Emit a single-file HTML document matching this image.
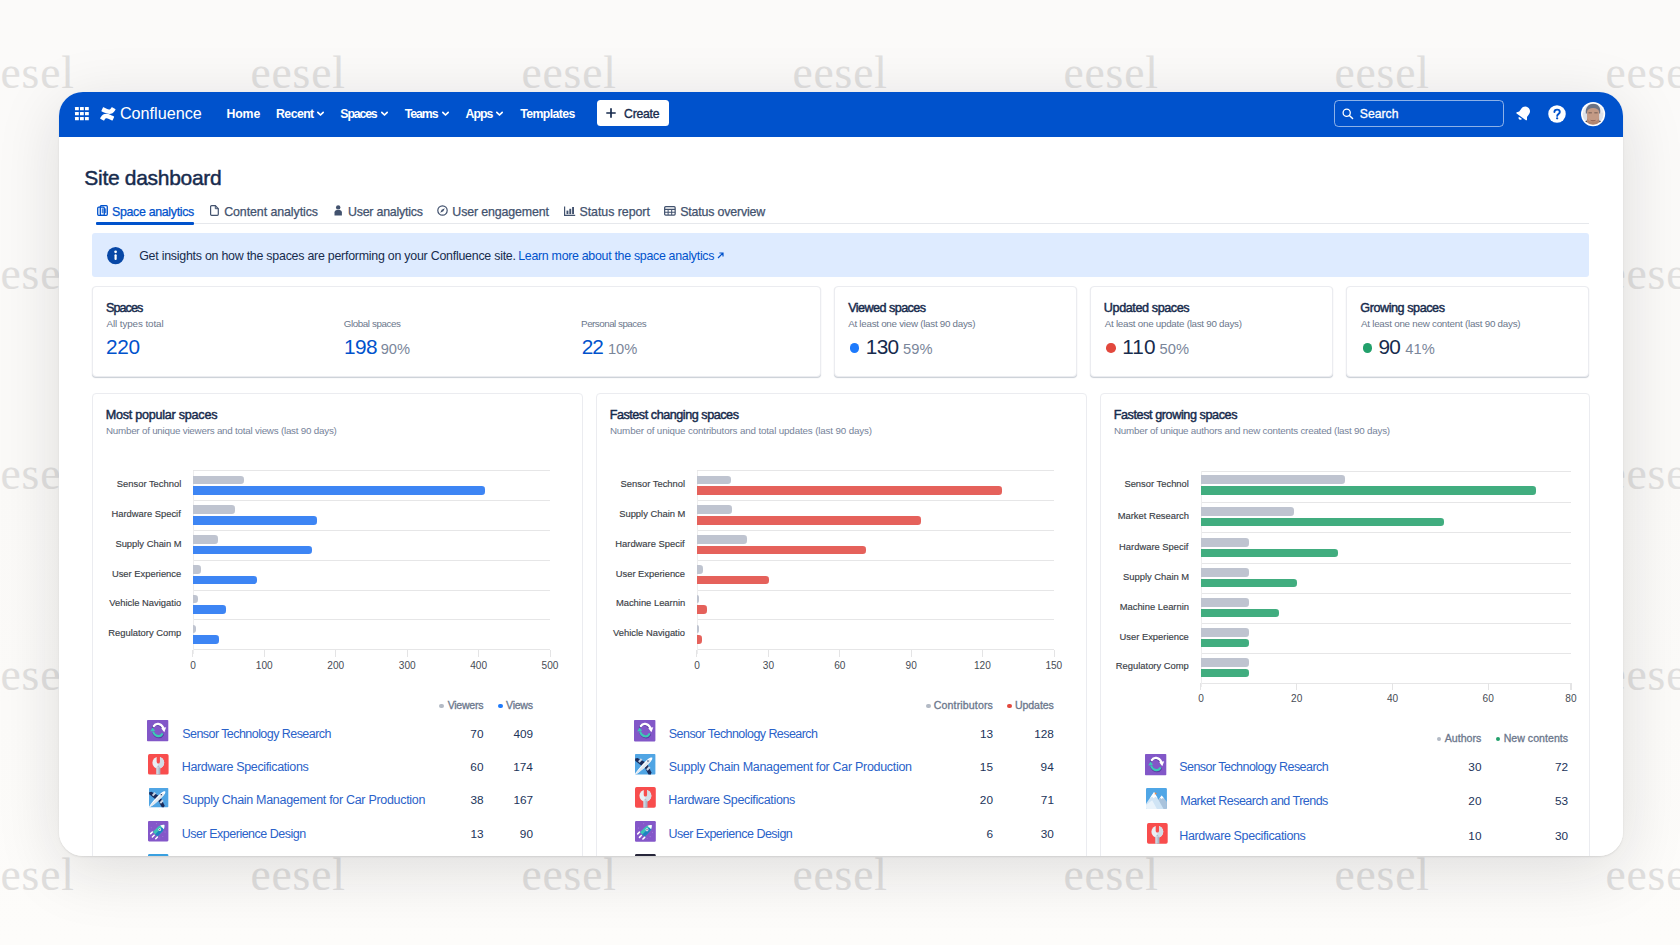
<!DOCTYPE html>
<html lang="en"><head><meta charset="utf-8"><title>Site dashboard - Confluence</title>
<style>
html,body{margin:0;padding:0}
body{width:1680px;height:945px;overflow:hidden;position:relative;background:#fbfaf8;font-family:"Liberation Sans",Arial,sans-serif}
.bg{position:absolute;left:0;top:0;width:1680px;height:945px;background:linear-gradient(180deg,#fbfaf9 0%,#fbfaf8 50%,#fdfcfa 100%)}
.t{position:absolute;white-space:nowrap;margin:0;padding:0}
.wm{position:absolute;white-space:nowrap;font-family:"Liberation Serif","Times New Roman",serif;font-size:45.5px;line-height:58px;color:#e1e0df;letter-spacing:0.85px}
.card{position:absolute;left:59px;top:91.5px;width:1564px;height:764.2px;border-radius:24px;overflow:hidden;background:#fff}
.shadow{position:absolute;left:59px;top:91.5px;width:1564px;height:764.2px;border-radius:24px;box-shadow:0 14px 64px rgba(20,25,30,.135),0 1px 2px rgba(0,0,0,.10)}
.nav{position:absolute;left:0;top:0;width:1564px;height:45px;background:#0052cc}
.panel{position:absolute;background:#fff;border:1px solid #ebecf0;border-radius:4px;box-sizing:border-box}
.stat{box-shadow:0 1px 1px rgba(9,30,66,.22)}
svg{position:absolute;overflow:visible}
</style></head><body>
<div class="bg"></div>

<div class="wm" style="left:-20.5px;top:43.5px">eesel</div>
<div class="wm" style="left:250.5px;top:43.5px">eesel</div>
<div class="wm" style="left:521.5px;top:43.5px">eesel</div>
<div class="wm" style="left:792.5px;top:43.5px">eesel</div>
<div class="wm" style="left:1063.5px;top:43.5px">eesel</div>
<div class="wm" style="left:1334.5px;top:43.5px">eesel</div>
<div class="wm" style="left:1605.5px;top:43.5px">eesel</div>
<div class="wm" style="left:-20.5px;top:244.5px">eesel</div>
<div class="wm" style="left:250.5px;top:244.5px">eesel</div>
<div class="wm" style="left:521.5px;top:244.5px">eesel</div>
<div class="wm" style="left:792.5px;top:244.5px">eesel</div>
<div class="wm" style="left:1063.5px;top:244.5px">eesel</div>
<div class="wm" style="left:1334.5px;top:244.5px">eesel</div>
<div class="wm" style="left:1605.5px;top:244.5px">eesel</div>
<div class="wm" style="left:-20.5px;top:444.5px">eesel</div>
<div class="wm" style="left:250.5px;top:444.5px">eesel</div>
<div class="wm" style="left:521.5px;top:444.5px">eesel</div>
<div class="wm" style="left:792.5px;top:444.5px">eesel</div>
<div class="wm" style="left:1063.5px;top:444.5px">eesel</div>
<div class="wm" style="left:1334.5px;top:444.5px">eesel</div>
<div class="wm" style="left:1605.5px;top:444.5px">eesel</div>
<div class="wm" style="left:-20.5px;top:645.5px">eesel</div>
<div class="wm" style="left:250.5px;top:645.5px">eesel</div>
<div class="wm" style="left:521.5px;top:645.5px">eesel</div>
<div class="wm" style="left:792.5px;top:645.5px">eesel</div>
<div class="wm" style="left:1063.5px;top:645.5px">eesel</div>
<div class="wm" style="left:1334.5px;top:645.5px">eesel</div>
<div class="wm" style="left:1605.5px;top:645.5px">eesel</div>
<div class="wm" style="left:-20.5px;top:845.5px">eesel</div>
<div class="wm" style="left:250.5px;top:845.5px">eesel</div>
<div class="wm" style="left:521.5px;top:845.5px">eesel</div>
<div class="wm" style="left:792.5px;top:845.5px">eesel</div>
<div class="wm" style="left:1063.5px;top:845.5px">eesel</div>
<div class="wm" style="left:1334.5px;top:845.5px">eesel</div>
<div class="wm" style="left:1605.5px;top:845.5px">eesel</div>
<div class="shadow"></div>
<div class="card">
<div class="nav"></div>
<svg style="left:15.900000000000006px;top:15.400000000000006px" width="15" height="14" viewBox="0 0 15 14"><rect x="0.00" y="0.00" width="3.8" height="3.3" rx="0.4" fill="#fff"/><rect x="5.00" y="0.00" width="3.8" height="3.3" rx="0.4" fill="#fff"/><rect x="10.00" y="0.00" width="3.8" height="3.3" rx="0.4" fill="#fff"/><rect x="0.00" y="5.00" width="3.8" height="3.3" rx="0.4" fill="#fff"/><rect x="5.00" y="5.00" width="3.8" height="3.3" rx="0.4" fill="#fff"/><rect x="10.00" y="5.00" width="3.8" height="3.3" rx="0.4" fill="#fff"/><rect x="0.00" y="10.00" width="3.8" height="3.3" rx="0.4" fill="#fff"/><rect x="5.00" y="10.00" width="3.8" height="3.3" rx="0.4" fill="#fff"/><rect x="10.00" y="10.00" width="3.8" height="3.3" rx="0.4" fill="#fff"/></svg>
<svg style="left:41px;top:15.099999999999994px" width="15.6" height="13.8" viewBox="0 0 32 30" preserveAspectRatio="none"><path d="M1.2 22.6c-.3.5-.7 1.1-.9 1.5-.3.5-.1 1.1.4 1.400l6.400 3.900c.5.300 1.100.200 1.400-.3.200-.4.600-1 .9-1.600 2.300-3.800 4.700-3.400 8.900-1.300l6.300 3c.5.300 1.200 0 1.400-.5l3-6.900c.2-.5 0-1.100-.5-1.400-1.300-.6-4-1.900-6.300-3C13.500 13.300 6.200 13.600 1.200 22.600z" fill="#fff"/><path d="M30.800 7.400c.3-.5.700-1.100.9-1.500.3-.5.100-1.100-.4-1.400L24.900.6c-.5-.3-1.100-.2-1.400.3-.2.400-.6 1-.9 1.600-2.300 3.800-4.700 3.400-8.900 1.300L7.400.8C6.900.5 6.200.8 6 1.300l-3 6.900c-.2.500 0 1.100.5 1.400 1.300.6 4 1.900 6.300 3 8.700 4.100 16 3.800 21-5.200z" fill="#fff"/></svg>
<span class="t" style="top:12.50px;font-size:16.2px;line-height:19.44px;color:#fff;letter-spacing:0.005px;left:60.88px;">Confluence</span>
<span class="t" style="top:15.50px;font-size:12.3px;line-height:14.76px;color:#fff;font-weight:700;letter-spacing:-0.174px;left:167.58px;">Home</span>
<span class="t" style="top:15.50px;font-size:12.3px;line-height:14.76px;color:#fff;font-weight:700;letter-spacing:-0.586px;left:217.08px;">Recent</span>
<svg style="left:258.2px;top:19.3px" width="7" height="6" viewBox="0 0 7 6"><path d="M0.8 1.3 L3.5 4 L6.2 1.3" fill="none" stroke="#fff" stroke-width="1.7" stroke-linecap="round" stroke-linejoin="round"/></svg>
<span class="t" style="top:15.50px;font-size:12.3px;line-height:14.76px;color:#fff;font-weight:700;letter-spacing:-1.142px;left:281.35px;">Spaces</span>
<svg style="left:321.8px;top:19.3px" width="7" height="6" viewBox="0 0 7 6"><path d="M0.8 1.3 L3.5 4 L6.2 1.3" fill="none" stroke="#fff" stroke-width="1.7" stroke-linecap="round" stroke-linejoin="round"/></svg>
<span class="t" style="top:15.50px;font-size:12.3px;line-height:14.76px;color:#fff;font-weight:700;letter-spacing:-1.077px;left:345.76px;">Teams</span>
<svg style="left:383.0px;top:19.3px" width="7" height="6" viewBox="0 0 7 6"><path d="M0.8 1.3 L3.5 4 L6.2 1.3" fill="none" stroke="#fff" stroke-width="1.7" stroke-linecap="round" stroke-linejoin="round"/></svg>
<span class="t" style="top:15.50px;font-size:12.3px;line-height:14.76px;color:#fff;font-weight:700;letter-spacing:-0.944px;left:406.49px;">Apps</span>
<svg style="left:437.4px;top:19.3px" width="7" height="6" viewBox="0 0 7 6"><path d="M0.8 1.3 L3.5 4 L6.2 1.3" fill="none" stroke="#fff" stroke-width="1.7" stroke-linecap="round" stroke-linejoin="round"/></svg>
<span class="t" style="top:15.50px;font-size:12.3px;line-height:14.76px;color:#fff;font-weight:700;letter-spacing:-0.621px;left:461.36px;">Templates</span>
<div style="position:absolute;left:537.80px;top:8.50px;width:72.20px;height:26.20px;background:#fff;border-radius:3.5px"></div>
<svg style="left:546.6px;top:16.5px" width="10" height="10" viewBox="0 0 10 10"><path d="M5 0.3V9.7M0.3 5H9.7" stroke="#172b4d" stroke-width="1.7" fill="none"/></svg>
<span class="t" style="top:15.50px;font-size:12.2px;line-height:14.64px;color:#172b4d;letter-spacing:-0.224px;left:565.08px;-webkit-text-stroke:0.35px #172b4d;">Create</span>
<div style="position:absolute;left:1274.60px;top:8.30px;width:170.20px;height:26.80px;box-sizing:border-box;border:1.2px solid rgba(255,255,255,.55);border-radius:4.5px"></div>
<svg style="left:1282.6px;top:16.099999999999994px" width="12" height="12" viewBox="0 0 12 12"><circle cx="4.7" cy="4.7" r="3.6" fill="none" stroke="#fff" stroke-width="1.3"/><path d="M7.4 7.4L10.6 10.6" stroke="#fff" stroke-width="1.4" stroke-linecap="round"/></svg>
<span class="t" style="top:15.50px;font-size:12.2px;line-height:14.64px;color:#fff;letter-spacing:0.006px;left:1300.85px;-webkit-text-stroke:0.3px #fff;">Search</span>
<svg style="left:1454.9px;top:12.400000000000006px" width="19.2" height="19.2" viewBox="0 0 24 24"><g transform="rotate(36 12 12)" fill="#fff"><path d="M12 2.6c-3.600 0-6 2.700-6 6.200v4.200l-1.900 2.600c-.4.600 0 1.400.7 1.400h14.400c.7 0 1.100-.8.700-1.400L18 13V8.800c0-3.500-2.400-6.200-6-6.200z"/><path d="M9.600 18.600h4.800c0 1.400-1.100 2.400-2.400 2.400s-2.400-1-2.400-2.400z"/></g></svg>
<svg style="left:1488.8px;top:13.0px" width="18" height="18" viewBox="0 0 18 18"><circle cx="9" cy="9" r="8.750" fill="#fff"/><path d="M6.400 7.100c0-1.500 1.200-2.500 2.700-2.500s2.700 1 2.700 2.400c0 1.900-2.600 2.100-2.600 3.900" fill="none" stroke="#0052cc" stroke-width="1.900" stroke-linecap="round"/><circle cx="9.150" cy="13.300" r="1.150" fill="#0052cc"/></svg>
<svg style="left:1521.5px;top:10.200000000000003px" width="24.2" height="24.2" viewBox="0 0 50 50"><defs><clipPath id="av"><circle cx="25" cy="25" r="21.800"/></clipPath></defs><circle cx="25" cy="25" r="25" fill="#fff"/><g clip-path="url(#av)"><rect width="50" height="50" fill="#dde1e8"/><rect x="0" y="0" width="50" height="22" fill="#e9ecf1"/><path d="M10 24C8 10 17 3.500 25.500 3.500S42 10 39.500 24z" fill="#6c7384"/><path d="M12.500 20c1-5 6-7.500 12.500-7.500s11.500 2.500 12.500 7.500v10c0 8-5 15-12.500 15S12.500 38 12.500 30z" fill="#c39a85"/><path d="M12.500 32c2 6 6 9 12.500 9s10.500-3 12.500-9v18h-25z" fill="#b28670"/><path d="M15.500 21.500h7v1.800h-7zM27.500 21.500h7v1.800h-7z" fill="#5d4a45"/><path d="M19 36.500c4 1.500 8 1.500 12 0-1 2.500-3.500 3.500-6 3.500s-5-1-6-3.500z" fill="#8c5c4e"/><path d="M0 50V43l12-5 1 12zM50 50V43l-12-5-1 12z" fill="#3b3843"/></g></svg>
<span class="t" style="top:73.50px;font-size:21px;line-height:25.2px;color:#172b4d;letter-spacing:-0.305px;left:25.35px;-webkit-text-stroke:0.45px #172b4d;">Site dashboard</span>
<div style="position:absolute;left:37.00px;top:131.80px;width:1493.00px;height:1.10px;background:#e6e8ec"></div>
<div style="position:absolute;left:36.60px;top:130.90px;width:98.30px;height:2.20px;background:#0052cc;border-radius:1px"></div>
<span class="t" style="top:113.50px;font-size:12.4px;line-height:14.88px;color:#0052cc;letter-spacing:-0.327px;left:53.04px;-webkit-text-stroke:0.25px #0052cc;">Space analytics</span>
<span class="t" style="top:113.50px;font-size:12.4px;line-height:14.88px;color:#42526e;letter-spacing:-0.073px;left:165.17px;-webkit-text-stroke:0.25px #42526e;">Content analytics</span>
<span class="t" style="top:113.50px;font-size:12.4px;line-height:14.88px;color:#42526e;letter-spacing:-0.231px;left:289.04px;-webkit-text-stroke:0.25px #42526e;">User analytics</span>
<span class="t" style="top:113.50px;font-size:12.4px;line-height:14.88px;color:#42526e;letter-spacing:-0.132px;left:393.34px;-webkit-text-stroke:0.25px #42526e;">User engagement</span>
<span class="t" style="top:113.50px;font-size:12.4px;line-height:14.88px;color:#42526e;letter-spacing:-0.040px;left:520.44px;-webkit-text-stroke:0.25px #42526e;">Status report</span>
<span class="t" style="top:113.50px;font-size:12.4px;line-height:14.88px;color:#42526e;letter-spacing:-0.173px;left:621.14px;-webkit-text-stroke:0.25px #42526e;">Status overview</span>
<svg style="left:37.6px;top:113.7px" width="11" height="11" viewBox="0 0 11 11"><rect x="0.7" y="2.2" width="6.6" height="8.100" rx="1" fill="none" stroke="#0052cc" stroke-width="1.300"/><rect x="3.300" y="0.7" width="7" height="9.600" rx="1" fill="none" stroke="#0052cc" stroke-width="1.300"/><path d="M5.300 3.400v4.800M7.100 3.400v4.800M8.700 3.400v4.800" stroke="#0052cc" stroke-width="0.9"/></svg>
<svg style="left:150.8px;top:113.8px" width="9" height="11" viewBox="0 0 9 11"><path d="M1.600 0.7h3.700l3 3v5.600a1 1 0 0 1-1 1H1.600a1 1 0 0 1-1-1V1.700a1 1 0 0 1 1-1z" fill="none" stroke="#42526e" stroke-width="1.200"/><path d="M5.300 0.700v3h3" fill="none" stroke="#42526e" stroke-width="1"/></svg>
<svg style="left:274.8px;top:113.5px" width="8.4" height="11" viewBox="0 0 8.400 11"><circle cx="4.200" cy="2.400" r="2.200" fill="#42526e"/><path d="M0.500 10.500V7.600c0-1.500 1.100-2.500 2.400-2.500h2.600c1.300 0 2.400 1 2.400 2.500v2.900z" fill="#42526e"/></svg>
<svg style="left:378.1px;top:113.7px" width="11" height="11" viewBox="0 0 11 11"><circle cx="5.500" cy="5.500" r="4.700" fill="none" stroke="#42526e" stroke-width="1.200"/><path d="M7.800 3.200L6.300 6.300 3.200 7.800 4.700 4.700z" fill="#42526e"/></svg>
<svg style="left:504.5px;top:114.3px" width="11.5" height="10" viewBox="0 0 11.500 10"><path d="M0.600 0.500v8.800h10.600" fill="none" stroke="#42526e" stroke-width="1.200"/><rect x="2.500" y="4.600" width="1.900" height="3.500" fill="#42526e"/><rect x="5.300" y="2.800" width="1.900" height="5.300" fill="#42526e"/><rect x="8.100" y="1" width="1.900" height="7.100" fill="#42526e"/></svg>
<svg style="left:605.2px;top:114.5px" width="11.8" height="9.7" viewBox="0 0 11.500 9.500"><rect x="0.600" y="0.600" width="10.300" height="8.300" rx="1" fill="none" stroke="#42526e" stroke-width="1.200"/><path d="M0.600 3.300h10.300M0.600 6.100h10.300M4 3.300v5.600M7.500 3.300v5.600" stroke="#42526e" stroke-width="1"/></svg>
<div style="position:absolute;left:33.00px;top:141.70px;width:1497.00px;height:44.20px;background:#deebff;border-radius:3px"></div>
<svg style="left:48.1px;top:155.6px" width="17.2" height="17.2" viewBox="0 0 17.200 17.200"><circle cx="8.600" cy="8.600" r="8.600" fill="#0747a6"/><rect x="7.500" y="7.300" width="2.200" height="5.800" rx="1" fill="#fff"/><circle cx="8.600" cy="4.800" r="1.350" fill="#fff"/></svg>
<span class="t" style="top:157.50px;font-size:12.4px;line-height:14.88px;color:#172b4d;letter-spacing:-0.239px;left:80.18px;">Get insights on how the spaces are performing on your Confluence site.</span>
<span class="t" style="top:157.50px;font-size:12.4px;line-height:14.88px;color:#0052cc;letter-spacing:-0.299px;left:459.28px;">Learn more about the space analytics</span>
<svg style="left:658.0px;top:160.1px" width="7" height="7" viewBox="0 0 7 7"><path d="M1 6L6 1M2.400 1H6v3.600" fill="none" stroke="#0052cc" stroke-width="1.200"/></svg>
<div class="panel stat" style="left:33px;top:194.5px;width:728.5px;height:91px"></div>
<div class="panel stat" style="left:775px;top:194.5px;width:243px;height:91px"></div>
<div class="panel stat" style="left:1031px;top:194.5px;width:243px;height:91px"></div>
<div class="panel stat" style="left:1287px;top:194.5px;width:243px;height:91px"></div>
<span class="t" style="top:209.50px;font-size:12.6px;line-height:15.12px;color:#172b4d;letter-spacing:-0.936px;left:46.93px;-webkit-text-stroke:0.45px #172b4d;">Spaces</span>
<span class="t" style="top:226.50px;font-size:9.8px;line-height:11.76px;color:#6b778c;letter-spacing:-0.078px;left:47.48px;">All types total</span>
<span class="t" style="top:243.50px;font-size:20.8px;line-height:24.96px;color:#0052cc;letter-spacing:-0.270px;left:46.95px;">220</span>
<span class="t" style="top:226.50px;font-size:9.8px;line-height:11.76px;color:#6b778c;letter-spacing:-0.420px;left:284.81px;">Global spaces</span>
<span class="t" style="top:243.50px;font-size:20.8px;line-height:24.96px;color:#0052cc;letter-spacing:-0.605px;left:285.12px;">198</span>
<span class="t" style="top:249.50px;font-size:14.7px;line-height:17.64px;color:#7a869a;letter-spacing:-0.042px;left:321.71px;">90%</span>
<span class="t" style="top:226.50px;font-size:9.8px;line-height:11.76px;color:#6b778c;letter-spacing:-0.498px;left:522.10px;">Personal spaces</span>
<span class="t" style="top:243.50px;font-size:20.8px;line-height:24.96px;color:#0052cc;letter-spacing:-1.040px;left:522.85px;">22</span>
<span class="t" style="top:249.50px;font-size:14.7px;line-height:17.64px;color:#7a869a;letter-spacing:-0.026px;left:548.88px;">10%</span>
<span class="t" style="top:209.50px;font-size:12.6px;line-height:15.12px;color:#172b4d;letter-spacing:-0.539px;left:789.14px;-webkit-text-stroke:0.45px #172b4d;">Viewed spaces</span>
<span class="t" style="top:226.50px;font-size:9.8px;line-height:11.76px;color:#6b778c;letter-spacing:-0.266px;left:789.18px;">At least one view (last 90 days)</span>
<div style="position:absolute;left:790.80px;top:251.90px;width:9.60px;height:9.60px;background:#1d7afc;border-radius:50%"></div>
<span class="t" style="top:243.50px;font-size:20.8px;line-height:24.96px;color:#172b4d;letter-spacing:-0.651px;left:806.72px;">130</span>
<span class="t" style="top:249.50px;font-size:14.7px;line-height:17.64px;color:#7a869a;letter-spacing:0.008px;left:844.11px;">59%</span>
<span class="t" style="top:209.50px;font-size:12.6px;line-height:15.12px;color:#172b4d;letter-spacing:-0.399px;left:1044.83px;-webkit-text-stroke:0.45px #172b4d;">Updated spaces</span>
<span class="t" style="top:226.50px;font-size:9.8px;line-height:11.76px;color:#6b778c;letter-spacing:-0.264px;left:1045.78px;">At least one update (last 90 days)</span>
<div style="position:absolute;left:1047.40px;top:251.90px;width:9.60px;height:9.60px;background:#e2483d;border-radius:50%"></div>
<span class="t" style="top:243.50px;font-size:20.8px;line-height:24.96px;color:#172b4d;letter-spacing:0.121px;left:1063.22px;">110</span>
<span class="t" style="top:249.50px;font-size:14.7px;line-height:17.64px;color:#7a869a;letter-spacing:0.158px;left:1100.41px;">50%</span>
<span class="t" style="top:209.50px;font-size:12.6px;line-height:15.12px;color:#172b4d;letter-spacing:-0.439px;left:1301.37px;-webkit-text-stroke:0.45px #172b4d;">Growing spaces</span>
<span class="t" style="top:226.50px;font-size:9.8px;line-height:11.76px;color:#6b778c;letter-spacing:-0.242px;left:1301.98px;">At least one new content (last 90 days)</span>
<div style="position:absolute;left:1303.60px;top:251.90px;width:9.60px;height:9.60px;background:#22a06b;border-radius:50%"></div>
<span class="t" style="top:243.50px;font-size:20.8px;line-height:24.96px;color:#172b4d;letter-spacing:-0.845px;left:1319.53px;">90</span>
<span class="t" style="top:249.50px;font-size:14.7px;line-height:17.64px;color:#7a869a;letter-spacing:0.032px;left:1346.36px;">41%</span>
<div class="panel" style="left:33.0px;top:301.5px;width:490.5px;height:520px"></div>
<span class="t" style="top:316.50px;font-size:12.6px;line-height:15.12px;color:#172b4d;letter-spacing:-0.245px;left:46.67px;-webkit-text-stroke:0.45px #172b4d;">Most popular spaces</span>
<span class="t" style="top:333.50px;font-size:9.8px;line-height:11.76px;color:#76839a;letter-spacing:-0.221px;left:46.90px;">Number of unique viewers and total views (last 90 days)</span>
<div style="position:absolute;left:134.00px;top:378.50px;width:357.00px;height:1.00px;background:#e6e6e7"></div>
<div style="position:absolute;left:134.00px;top:408.50px;width:357.00px;height:1.00px;background:#e6e6e7"></div>
<div style="position:absolute;left:134.00px;top:438.50px;width:357.00px;height:1.00px;background:#e6e6e7"></div>
<div style="position:absolute;left:134.00px;top:468.50px;width:357.00px;height:1.00px;background:#e6e6e7"></div>
<div style="position:absolute;left:134.00px;top:498.50px;width:357.00px;height:1.00px;background:#e6e6e7"></div>
<div style="position:absolute;left:134.00px;top:527.50px;width:357.00px;height:1.00px;background:#e6e6e7"></div>
<div style="position:absolute;left:134.00px;top:557.50px;width:357.00px;height:1.00px;background:#e6e6e7"></div>
<div style="position:absolute;left:133.50px;top:379.50px;width:1.00px;height:182.70px;background:#ededee"></div>
<div style="position:absolute;left:133.00px;top:558.50px;width:1.00px;height:6.50px;background:#e4e4e5"></div>
<span class="t" style="top:568.50px;font-size:10.1px;line-height:12.12px;color:#474c55;left:131.19px;">0</span>
<div style="position:absolute;left:205.00px;top:558.50px;width:1.00px;height:6.50px;background:#e4e4e5"></div>
<span class="t" style="top:568.50px;font-size:10.1px;line-height:12.12px;color:#474c55;left:196.79px;">100</span>
<div style="position:absolute;left:276.00px;top:558.50px;width:1.00px;height:6.50px;background:#e4e4e5"></div>
<span class="t" style="top:568.50px;font-size:10.1px;line-height:12.12px;color:#474c55;left:268.32px;">200</span>
<div style="position:absolute;left:348.00px;top:558.50px;width:1.00px;height:6.50px;background:#e4e4e5"></div>
<span class="t" style="top:568.50px;font-size:10.1px;line-height:12.12px;color:#474c55;left:339.78px;">300</span>
<div style="position:absolute;left:419.00px;top:558.50px;width:1.00px;height:6.50px;background:#e4e4e5"></div>
<span class="t" style="top:568.50px;font-size:10.1px;line-height:12.12px;color:#474c55;left:411.26px;">400</span>
<div style="position:absolute;left:491.00px;top:558.50px;width:1.00px;height:6.50px;background:#e4e4e5"></div>
<span class="t" style="top:568.50px;font-size:10.1px;line-height:12.12px;color:#474c55;left:482.57px;">500</span>
<div style="position:absolute;left:491.00px;top:558.50px;width:1.00px;height:6.50px;background:#e4e4e5"></div>
<span class="t" style="top:386.50px;font-size:9.4px;line-height:11.28px;color:#3a3e46;left:57.81px;-webkit-text-stroke:0.15px #3a3e46;">Sensor Technol</span>
<span class="t" style="top:416.50px;font-size:9.4px;line-height:11.28px;color:#3a3e46;left:52.49px;-webkit-text-stroke:0.15px #3a3e46;">Hardware Specif</span>
<span class="t" style="top:446.50px;font-size:9.4px;line-height:11.28px;color:#3a3e46;left:56.39px;-webkit-text-stroke:0.15px #3a3e46;">Supply Chain M</span>
<span class="t" style="top:476.50px;font-size:9.4px;line-height:11.28px;color:#3a3e46;left:52.92px;-webkit-text-stroke:0.15px #3a3e46;">User Experience</span>
<span class="t" style="top:505.50px;font-size:9.4px;line-height:11.28px;color:#3a3e46;left:50.28px;-webkit-text-stroke:0.15px #3a3e46;">Vehicle Navigatio</span>
<span class="t" style="top:535.50px;font-size:9.4px;line-height:11.28px;color:#3a3e46;left:49.25px;-webkit-text-stroke:0.15px #3a3e46;">Regulatory Comp</span>
<div style="position:absolute;left:134.00px;top:384.10px;width:50.78px;height:8.60px;background:#bfc4d0;border-radius:0 3.200px 3.200px 0"></div>
<div style="position:absolute;left:134.00px;top:394.70px;width:292.03px;height:8.60px;background:#3d85f4;border-radius:0 3.200px 3.200px 0"></div>
<div style="position:absolute;left:134.00px;top:413.90px;width:41.50px;height:8.60px;background:#bfc4d0;border-radius:0 3.200px 3.200px 0"></div>
<div style="position:absolute;left:134.00px;top:424.50px;width:124.24px;height:8.60px;background:#3d85f4;border-radius:0 3.200px 3.200px 0"></div>
<div style="position:absolute;left:134.00px;top:443.70px;width:25.13px;height:8.60px;background:#bfc4d0;border-radius:0 3.200px 3.200px 0"></div>
<div style="position:absolute;left:134.00px;top:454.30px;width:119.24px;height:8.60px;background:#3d85f4;border-radius:0 3.200px 3.200px 0"></div>
<div style="position:absolute;left:134.00px;top:473.50px;width:8.28px;height:8.60px;background:#bfc4d0;border-radius:0 3.200px 3.200px 0"></div>
<div style="position:absolute;left:134.00px;top:484.10px;width:64.26px;height:8.60px;background:#3d85f4;border-radius:0 3.200px 3.200px 0"></div>
<div style="position:absolute;left:134.00px;top:503.30px;width:4.50px;height:8.60px;background:#bfc4d0;border-radius:0 3.200px 3.200px 0"></div>
<div style="position:absolute;left:134.00px;top:513.90px;width:33.00px;height:8.60px;background:#3d85f4;border-radius:0 3.200px 3.200px 0"></div>
<div style="position:absolute;left:134.00px;top:533.10px;width:3.00px;height:8.60px;background:#bfc4d0;border-radius:0 3.200px 3.200px 0"></div>
<div style="position:absolute;left:134.00px;top:543.70px;width:25.80px;height:8.60px;background:#3d85f4;border-radius:0 3.200px 3.200px 0"></div>
<div style="position:absolute;left:380.30px;top:612.10px;width:4.70px;height:4.70px;background:#b3bac5;border-radius:50%"></div>
<span class="t" style="top:607.50px;font-size:10.6px;line-height:12.72px;color:#6b778c;letter-spacing:-0.260px;left:388.65px;-webkit-text-stroke:0.3px #6b778c;">Viewers</span>
<div style="position:absolute;left:439.00px;top:612.10px;width:4.70px;height:4.70px;background:#1d7afc;border-radius:50%"></div>
<span class="t" style="top:607.50px;font-size:10.6px;line-height:12.72px;color:#6b778c;letter-spacing:-0.284px;left:447.05px;-webkit-text-stroke:0.3px #6b778c;">Views</span>
<svg style="left:88.4px;top:628.7px" width="21.3" height="21.3" viewBox="0 0 22 22"><rect width="22" height="22" rx="0.8" fill="#8257c8"/><path d="M6.300 7.400C8 3.800 13.600 3.400 16.200 8.600" fill="none" stroke="#5a3da3" stroke-width="2.600" stroke-linecap="round"/><path d="M16.200 15.400C14.400 18.600 9.200 18.600 6.800 13.600" fill="none" stroke="#5a3da3" stroke-width="2.600" stroke-linecap="round"/><path d="M7 6.300C8.800 3 14.200 2.800 16.800 8" fill="none" stroke="#fff" stroke-width="2.300" stroke-linecap="round"/><path d="M14.600 8.500l5.200-1-1.900 5.100z" fill="#fff"/><path d="M15.600 14.600C13.800 17.800 8.800 17.600 6.600 12.800" fill="none" stroke="#3cc9b6" stroke-width="2.300" stroke-linecap="round"/><path d="M3.300 11.800l2.500-4 2.600 3.200z" fill="#3cc9b6"/></svg>
<span class="t" style="top:635.50px;font-size:12.5px;line-height:15.0px;color:#2a62c9;letter-spacing:-0.556px;left:123.23px;">Sensor Technology Research</span>
<span class="t" style="top:635.50px;font-size:11.8px;line-height:14.16px;color:#22345a;left:411.34px;">70</span>
<span class="t" style="top:635.50px;font-size:11.8px;line-height:14.16px;color:#22345a;left:454.38px;">409</span>
<svg style="left:89.2px;top:662.0px" width="20.6" height="20.6" viewBox="0 0 22 22"><rect width="22" height="22" rx="1.800" fill="#f84d4d"/><circle cx="11" cy="9.300" r="6.300" fill="#e9eff4"/><path d="M11 3a6.300 6.300 0 0 1 0 12.600z" fill="#d3dde6"/><path d="M9.250 0h3.500v8.400a1.750 1.750 0 0 1-3.500 0z" fill="#f84d4d"/><path d="M9 14.500h4V22H9z" fill="#b9c7d5"/><path d="M9 14.500h1.300V22H9z" fill="#d3dde6"/><path d="M11.900 14.500H13V22h-1.100z" fill="#a5b5c6"/><circle cx="11" cy="13.400" r="1" fill="#b0bfce"/></svg>
<span class="t" style="top:668.50px;font-size:12.5px;line-height:15.0px;color:#2a62c9;letter-spacing:-0.355px;left:122.77px;">Hardware Specifications</span>
<span class="t" style="top:668.50px;font-size:11.8px;line-height:14.16px;color:#22345a;left:411.34px;">60</span>
<span class="t" style="top:668.50px;font-size:11.8px;line-height:14.16px;color:#22345a;left:454.16px;">174</span>
<svg style="left:90.0px;top:696.6px" width="19.3" height="19.3" viewBox="0 0 22 22"><rect width="22" height="22" rx="0.800" fill="#50a5e4"/><path d="M8.400 13.800L0.200 7.200V4.800l2.600-0.400L12.600 9.600z" fill="#1b2b5a"/><path d="M9.400 12.600l5.200 9.400h2.600l0.400-2.400L12.800 9.600z" fill="#1b2b5a"/><path d="M3.300 7.900l3-3.200 1.700 1.600-3 3.200z" fill="#c9d5e4"/><path d="M12 16.400l3-3.200 1.700 1.600-3 3.200z" fill="#c9d5e4"/><path d="M0 22c-.3-1.200 9-12.600 14.400-16.800 1.800-1.400 3.600-1.900 4.100-1.300.5.600 0 2.400-1.500 4.100C12.600 13.200 3 21.600 0.400 22z" fill="#fff"/><path d="M0 22c3-4 9.500-10.500 16-16.500L17 8C12.600 13.200 3 21.600 0.400 22z" fill="#dfe7f0"/><circle cx="14" cy="7.600" r="0.800" fill="#1b2b5a"/></svg>
<span class="t" style="top:701.50px;font-size:12.5px;line-height:15.0px;color:#2a62c9;letter-spacing:-0.305px;left:123.23px;">Supply Chain Management for Car Production</span>
<span class="t" style="top:701.50px;font-size:11.8px;line-height:14.16px;color:#22345a;left:411.39px;">38</span>
<span class="t" style="top:701.50px;font-size:11.8px;line-height:14.16px;color:#22345a;left:454.41px;">167</span>
<svg style="left:89.2px;top:729.3px" width="20.4" height="20.4" viewBox="0 0 22 22"><rect width="22" height="22" rx="1.200" fill="#8457c9"/><g transform="rotate(45 11 11)"><path d="M11 1.400c2.600 2 3.500 5.400 3.500 8.600v5.600h-7V10c0-3.200.900-6.600 3.500-8.600z" fill="#3cc3b7"/><path d="M11 1.400c2.600 2 3.500 5.400 3.500 8.600v5.600H11z" fill="#1f80c2"/><path d="M11 1.400c1.300 1 2.100 2.300 2.700 3.800H8.300c.6-1.500 1.400-2.800 2.700-3.800z" fill="#fff"/><circle cx="11" cy="8.600" r="1.500" fill="#fff"/><circle cx="11" cy="8.600" r="0.700" fill="#27467a"/><rect x="6.300" y="15.200" width="1.600" height="4.200" rx=".8" fill="#fff"/><rect x="10.200" y="16.300" width="1.600" height="4.400" rx=".8" fill="#fff"/><rect x="14.100" y="15.200" width="1.600" height="4.200" rx=".8" fill="#fff"/></g><circle cx="3.500" cy="7.400" r=".5" fill="#b79be6"/><circle cx="9.300" cy="3" r=".5" fill="#b79be6"/><circle cx="18.400" cy="11.800" r=".5" fill="#b79be6"/><circle cx="16" cy="16.600" r=".5" fill="#b79be6"/><circle cx="12.800" cy="18.300" r=".4" fill="#b79be6"/></svg>
<span class="t" style="top:735.50px;font-size:12.5px;line-height:15.0px;color:#2a62c9;letter-spacing:-0.496px;left:122.84px;">User Experience Design</span>
<span class="t" style="top:735.50px;font-size:11.8px;line-height:14.16px;color:#22345a;left:411.40px;">13</span>
<span class="t" style="top:735.50px;font-size:11.8px;line-height:14.16px;color:#22345a;left:460.84px;">90</span>
<svg style="left:89.2px;top:762.6px" width="20.4" height="20.4" viewBox="0 0 22 22"><rect width="22" height="22" rx="1.500" fill="#3aa0e0"/></svg>
<div class="panel" style="left:537.0px;top:301.5px;width:490.5px;height:520px"></div>
<span class="t" style="top:316.50px;font-size:12.6px;line-height:15.12px;color:#172b4d;letter-spacing:-0.456px;left:550.67px;-webkit-text-stroke:0.45px #172b4d;">Fastest changing spaces</span>
<span class="t" style="top:333.50px;font-size:9.8px;line-height:11.76px;color:#76839a;letter-spacing:-0.149px;left:550.90px;">Number of unique contributors and total updates (last 90 days)</span>
<div style="position:absolute;left:638.00px;top:378.50px;width:357.00px;height:1.00px;background:#e6e6e7"></div>
<div style="position:absolute;left:638.00px;top:408.50px;width:357.00px;height:1.00px;background:#e6e6e7"></div>
<div style="position:absolute;left:638.00px;top:438.50px;width:357.00px;height:1.00px;background:#e6e6e7"></div>
<div style="position:absolute;left:638.00px;top:468.50px;width:357.00px;height:1.00px;background:#e6e6e7"></div>
<div style="position:absolute;left:638.00px;top:498.50px;width:357.00px;height:1.00px;background:#e6e6e7"></div>
<div style="position:absolute;left:638.00px;top:527.50px;width:357.00px;height:1.00px;background:#e6e6e7"></div>
<div style="position:absolute;left:638.00px;top:557.50px;width:357.00px;height:1.00px;background:#e6e6e7"></div>
<div style="position:absolute;left:637.50px;top:379.50px;width:1.00px;height:182.70px;background:#ededee"></div>
<div style="position:absolute;left:637.00px;top:558.50px;width:1.00px;height:6.50px;background:#e4e4e5"></div>
<span class="t" style="top:568.50px;font-size:10.1px;line-height:12.12px;color:#474c55;left:635.19px;">0</span>
<div style="position:absolute;left:709.00px;top:558.50px;width:1.00px;height:6.50px;background:#e4e4e5"></div>
<span class="t" style="top:568.50px;font-size:10.1px;line-height:12.12px;color:#474c55;left:703.79px;">30</span>
<div style="position:absolute;left:780.00px;top:558.50px;width:1.00px;height:6.50px;background:#e4e4e5"></div>
<span class="t" style="top:568.50px;font-size:10.1px;line-height:12.12px;color:#474c55;left:775.13px;">60</span>
<div style="position:absolute;left:852.00px;top:558.50px;width:1.00px;height:6.50px;background:#e4e4e5"></div>
<span class="t" style="top:568.50px;font-size:10.1px;line-height:12.12px;color:#474c55;left:846.55px;">90</span>
<div style="position:absolute;left:923.00px;top:558.50px;width:1.00px;height:6.50px;background:#e4e4e5"></div>
<span class="t" style="top:568.50px;font-size:10.1px;line-height:12.12px;color:#474c55;left:914.99px;">120</span>
<div style="position:absolute;left:995.00px;top:558.50px;width:1.00px;height:6.50px;background:#e4e4e5"></div>
<span class="t" style="top:568.50px;font-size:10.1px;line-height:12.12px;color:#474c55;left:986.39px;">150</span>
<div style="position:absolute;left:995.00px;top:558.50px;width:1.00px;height:6.50px;background:#e4e4e5"></div>
<span class="t" style="top:386.50px;font-size:9.4px;line-height:11.28px;color:#3a3e46;left:561.61px;-webkit-text-stroke:0.15px #3a3e46;">Sensor Technol</span>
<span class="t" style="top:416.50px;font-size:9.4px;line-height:11.28px;color:#3a3e46;left:560.19px;-webkit-text-stroke:0.15px #3a3e46;">Supply Chain M</span>
<span class="t" style="top:446.50px;font-size:9.4px;line-height:11.28px;color:#3a3e46;left:556.29px;-webkit-text-stroke:0.15px #3a3e46;">Hardware Specif</span>
<span class="t" style="top:476.50px;font-size:9.4px;line-height:11.28px;color:#3a3e46;left:556.72px;-webkit-text-stroke:0.15px #3a3e46;">User Experience</span>
<span class="t" style="top:505.50px;font-size:9.4px;line-height:11.28px;color:#3a3e46;left:556.90px;-webkit-text-stroke:0.15px #3a3e46;">Machine Learnin</span>
<span class="t" style="top:535.50px;font-size:9.4px;line-height:11.28px;color:#3a3e46;left:554.08px;-webkit-text-stroke:0.15px #3a3e46;">Vehicle Navigatio</span>
<div style="position:absolute;left:638.00px;top:384.10px;width:34.40px;height:8.60px;background:#bfc4d0;border-radius:0 3.200px 3.200px 0"></div>
<div style="position:absolute;left:638.00px;top:394.70px;width:304.60px;height:8.60px;background:#e5615b;border-radius:0 3.200px 3.200px 0"></div>
<div style="position:absolute;left:638.00px;top:413.90px;width:35.30px;height:8.60px;background:#bfc4d0;border-radius:0 3.200px 3.200px 0"></div>
<div style="position:absolute;left:638.00px;top:424.50px;width:223.80px;height:8.60px;background:#e5615b;border-radius:0 3.200px 3.200px 0"></div>
<div style="position:absolute;left:638.00px;top:443.70px;width:49.90px;height:8.60px;background:#bfc4d0;border-radius:0 3.200px 3.200px 0"></div>
<div style="position:absolute;left:638.00px;top:454.30px;width:169.00px;height:8.60px;background:#e5615b;border-radius:0 3.200px 3.200px 0"></div>
<div style="position:absolute;left:638.00px;top:473.50px;width:6.40px;height:8.60px;background:#bfc4d0;border-radius:0 3.200px 3.200px 0"></div>
<div style="position:absolute;left:638.00px;top:484.10px;width:71.60px;height:8.60px;background:#e5615b;border-radius:0 3.200px 3.200px 0"></div>
<div style="position:absolute;left:638.00px;top:503.30px;width:2.40px;height:8.60px;background:#bfc4d0;border-radius:0 3.200px 3.200px 0"></div>
<div style="position:absolute;left:638.00px;top:513.90px;width:9.80px;height:8.60px;background:#e5615b;border-radius:0 3.200px 3.200px 0"></div>
<div style="position:absolute;left:638.00px;top:533.10px;width:2.40px;height:8.60px;background:#bfc4d0;border-radius:0 3.200px 3.200px 0"></div>
<div style="position:absolute;left:638.00px;top:543.70px;width:4.80px;height:8.60px;background:#e5615b;border-radius:0 3.200px 3.200px 0"></div>
<div style="position:absolute;left:867.30px;top:612.10px;width:4.70px;height:4.70px;background:#b3bac5;border-radius:50%"></div>
<span class="t" style="top:607.50px;font-size:10.6px;line-height:12.72px;color:#6b778c;letter-spacing:0.129px;left:874.76px;-webkit-text-stroke:0.3px #6b778c;">Contributors</span>
<div style="position:absolute;left:948.40px;top:612.10px;width:4.70px;height:4.70px;background:#e2483d;border-radius:50%"></div>
<span class="t" style="top:607.50px;font-size:10.6px;line-height:12.72px;color:#6b778c;letter-spacing:-0.076px;left:955.88px;-webkit-text-stroke:0.3px #6b778c;">Updates</span>
<svg style="left:575.3px;top:628.9px" width="21.4" height="21.4" viewBox="0 0 22 22"><rect width="22" height="22" rx="0.8" fill="#8257c8"/><path d="M6.300 7.400C8 3.800 13.600 3.400 16.200 8.600" fill="none" stroke="#5a3da3" stroke-width="2.600" stroke-linecap="round"/><path d="M16.200 15.400C14.400 18.600 9.200 18.600 6.800 13.600" fill="none" stroke="#5a3da3" stroke-width="2.600" stroke-linecap="round"/><path d="M7 6.300C8.800 3 14.200 2.800 16.800 8" fill="none" stroke="#fff" stroke-width="2.300" stroke-linecap="round"/><path d="M14.600 8.500l5.200-1-1.900 5.100z" fill="#fff"/><path d="M15.600 14.600C13.800 17.800 8.800 17.600 6.600 12.800" fill="none" stroke="#3cc9b6" stroke-width="2.300" stroke-linecap="round"/><path d="M3.300 11.800l2.500-4 2.600 3.200z" fill="#3cc9b6"/></svg>
<span class="t" style="top:635.50px;font-size:12.5px;line-height:15.0px;color:#2a62c9;letter-spacing:-0.556px;left:609.83px;">Sensor Technology Research</span>
<span class="t" style="top:635.50px;font-size:11.8px;line-height:14.16px;color:#22345a;left:920.90px;">13</span>
<span class="t" style="top:635.50px;font-size:11.8px;line-height:14.16px;color:#22345a;left:975.23px;">128</span>
<svg style="left:576.4px;top:662.9px" width="20.4" height="20.4" viewBox="0 0 22 22"><rect width="22" height="22" rx="0.800" fill="#50a5e4"/><path d="M8.400 13.800L0.200 7.200V4.800l2.600-0.400L12.600 9.600z" fill="#1b2b5a"/><path d="M9.400 12.600l5.200 9.400h2.600l0.400-2.400L12.800 9.600z" fill="#1b2b5a"/><path d="M3.300 7.900l3-3.200 1.700 1.600-3 3.200z" fill="#c9d5e4"/><path d="M12 16.400l3-3.200 1.700 1.600-3 3.200z" fill="#c9d5e4"/><path d="M0 22c-.3-1.200 9-12.600 14.400-16.800 1.800-1.400 3.600-1.900 4.100-1.300.5.600 0 2.400-1.500 4.100C12.600 13.200 3 21.600 0.400 22z" fill="#fff"/><path d="M0 22c3-4 9.500-10.500 16-16.500L17 8C12.600 13.200 3 21.600 0.400 22z" fill="#dfe7f0"/><circle cx="14" cy="7.600" r="0.800" fill="#1b2b5a"/></svg>
<span class="t" style="top:668.50px;font-size:12.5px;line-height:15.0px;color:#2a62c9;letter-spacing:-0.305px;left:609.83px;">Supply Chain Management for Car Production</span>
<span class="t" style="top:668.50px;font-size:11.8px;line-height:14.16px;color:#22345a;left:920.87px;">15</span>
<span class="t" style="top:668.50px;font-size:11.8px;line-height:14.16px;color:#22345a;left:981.62px;">94</span>
<svg style="left:575.8px;top:695.7px" width="20.8" height="20.8" viewBox="0 0 22 22"><rect width="22" height="22" rx="1.800" fill="#f84d4d"/><circle cx="11" cy="9.300" r="6.300" fill="#e9eff4"/><path d="M11 3a6.300 6.300 0 0 1 0 12.600z" fill="#d3dde6"/><path d="M9.250 0h3.500v8.400a1.750 1.750 0 0 1-3.500 0z" fill="#f84d4d"/><path d="M9 14.500h4V22H9z" fill="#b9c7d5"/><path d="M9 14.500h1.300V22H9z" fill="#d3dde6"/><path d="M11.900 14.500H13V22h-1.100z" fill="#a5b5c6"/><circle cx="11" cy="13.400" r="1" fill="#b0bfce"/></svg>
<span class="t" style="top:701.50px;font-size:12.5px;line-height:15.0px;color:#2a62c9;letter-spacing:-0.355px;left:609.37px;">Hardware Specifications</span>
<span class="t" style="top:701.50px;font-size:11.8px;line-height:14.16px;color:#22345a;left:920.84px;">20</span>
<span class="t" style="top:701.50px;font-size:11.8px;line-height:14.16px;color:#22345a;left:981.85px;">71</span>
<svg style="left:575.8px;top:729.3px" width="20.8" height="20.8" viewBox="0 0 22 22"><rect width="22" height="22" rx="1.200" fill="#8457c9"/><g transform="rotate(45 11 11)"><path d="M11 1.400c2.600 2 3.500 5.400 3.500 8.600v5.600h-7V10c0-3.200.900-6.600 3.500-8.600z" fill="#3cc3b7"/><path d="M11 1.400c2.600 2 3.500 5.400 3.500 8.600v5.600H11z" fill="#1f80c2"/><path d="M11 1.400c1.300 1 2.100 2.300 2.700 3.800H8.300c.6-1.500 1.400-2.800 2.700-3.800z" fill="#fff"/><circle cx="11" cy="8.600" r="1.500" fill="#fff"/><circle cx="11" cy="8.600" r="0.700" fill="#27467a"/><rect x="6.300" y="15.200" width="1.600" height="4.200" rx=".8" fill="#fff"/><rect x="10.200" y="16.300" width="1.600" height="4.400" rx=".8" fill="#fff"/><rect x="14.100" y="15.200" width="1.600" height="4.200" rx=".8" fill="#fff"/></g><circle cx="3.500" cy="7.400" r=".5" fill="#b79be6"/><circle cx="9.300" cy="3" r=".5" fill="#b79be6"/><circle cx="18.400" cy="11.800" r=".5" fill="#b79be6"/><circle cx="16" cy="16.600" r=".5" fill="#b79be6"/><circle cx="12.800" cy="18.300" r=".4" fill="#b79be6"/></svg>
<span class="t" style="top:735.50px;font-size:12.5px;line-height:15.0px;color:#2a62c9;letter-spacing:-0.496px;left:609.44px;">User Experience Design</span>
<span class="t" style="top:735.50px;font-size:11.8px;line-height:14.16px;color:#22345a;left:927.46px;">6</span>
<span class="t" style="top:735.50px;font-size:11.8px;line-height:14.16px;color:#22345a;left:981.74px;">30</span>
<svg style="left:575.8px;top:762.7px" width="20.8" height="20.8" viewBox="0 0 22 22"><rect width="22" height="22" rx="1.500" fill="#26263a"/></svg>
<div class="panel" style="left:1041.0px;top:301.5px;width:489.5px;height:520px"></div>
<span class="t" style="top:316.50px;font-size:12.6px;line-height:15.12px;color:#172b4d;letter-spacing:-0.405px;left:1054.67px;-webkit-text-stroke:0.45px #172b4d;">Fastest growing spaces</span>
<span class="t" style="top:333.50px;font-size:9.8px;line-height:11.76px;color:#76839a;letter-spacing:-0.214px;left:1054.90px;">Number of unique authors and new contents created (last 90 days)</span>
<div style="position:absolute;left:1142.00px;top:379.50px;width:370.30px;height:1.00px;background:#e6e6e7"></div>
<div style="position:absolute;left:1142.00px;top:410.50px;width:370.30px;height:1.00px;background:#e6e6e7"></div>
<div style="position:absolute;left:1142.00px;top:440.50px;width:370.30px;height:1.00px;background:#e6e6e7"></div>
<div style="position:absolute;left:1142.00px;top:471.50px;width:370.30px;height:1.00px;background:#e6e6e7"></div>
<div style="position:absolute;left:1142.00px;top:501.50px;width:370.30px;height:1.00px;background:#e6e6e7"></div>
<div style="position:absolute;left:1142.00px;top:531.50px;width:370.30px;height:1.00px;background:#e6e6e7"></div>
<div style="position:absolute;left:1142.00px;top:561.50px;width:370.30px;height:1.00px;background:#e6e6e7"></div>
<div style="position:absolute;left:1142.00px;top:591.50px;width:370.30px;height:1.00px;background:#e6e6e7"></div>
<div style="position:absolute;left:1141.50px;top:379.70px;width:1.00px;height:216.00px;background:#ededee"></div>
<div style="position:absolute;left:1141.00px;top:591.50px;width:1.00px;height:6.50px;background:#e4e4e5"></div>
<span class="t" style="top:601.50px;font-size:10.1px;line-height:12.12px;color:#474c55;left:1139.19px;">0</span>
<div style="position:absolute;left:1237.00px;top:591.50px;width:1.00px;height:6.50px;background:#e4e4e5"></div>
<span class="t" style="top:601.50px;font-size:10.1px;line-height:12.12px;color:#474c55;left:1232.08px;">20</span>
<div style="position:absolute;left:1333.00px;top:591.50px;width:1.00px;height:6.50px;background:#e4e4e5"></div>
<span class="t" style="top:601.50px;font-size:10.1px;line-height:12.12px;color:#474c55;left:1327.97px;">40</span>
<div style="position:absolute;left:1429.00px;top:591.50px;width:1.00px;height:6.50px;background:#e4e4e5"></div>
<span class="t" style="top:601.50px;font-size:10.1px;line-height:12.12px;color:#474c55;left:1423.58px;">60</span>
<div style="position:absolute;left:1511.00px;top:591.50px;width:1.00px;height:6.50px;background:#e4e4e5"></div>
<span class="t" style="top:601.50px;font-size:10.1px;line-height:12.12px;color:#474c55;left:1506.36px;">80</span>
<div style="position:absolute;left:1512.00px;top:591.50px;width:1.00px;height:6.50px;background:#e4e4e5"></div>
<span class="t" style="top:386.50px;font-size:9.4px;line-height:11.28px;color:#3a3e46;left:1065.41px;-webkit-text-stroke:0.15px #3a3e46;">Sensor Technol</span>
<span class="t" style="top:418.50px;font-size:9.4px;line-height:11.28px;color:#3a3e46;left:1058.63px;-webkit-text-stroke:0.15px #3a3e46;">Market Research</span>
<span class="t" style="top:449.50px;font-size:9.4px;line-height:11.28px;color:#3a3e46;left:1060.09px;-webkit-text-stroke:0.15px #3a3e46;">Hardware Specif</span>
<span class="t" style="top:479.50px;font-size:9.4px;line-height:11.28px;color:#3a3e46;left:1063.99px;-webkit-text-stroke:0.15px #3a3e46;">Supply Chain M</span>
<span class="t" style="top:509.50px;font-size:9.4px;line-height:11.28px;color:#3a3e46;left:1060.70px;-webkit-text-stroke:0.15px #3a3e46;">Machine Learnin</span>
<span class="t" style="top:539.50px;font-size:9.4px;line-height:11.28px;color:#3a3e46;left:1060.52px;-webkit-text-stroke:0.15px #3a3e46;">User Experience</span>
<span class="t" style="top:568.50px;font-size:9.4px;line-height:11.28px;color:#3a3e46;left:1056.85px;-webkit-text-stroke:0.15px #3a3e46;">Regulatory Comp</span>
<div style="position:absolute;left:1142.00px;top:383.90px;width:143.80px;height:8.60px;background:#bfc4d0;border-radius:0 3.200px 3.200px 0"></div>
<div style="position:absolute;left:1142.00px;top:394.50px;width:335.40px;height:8.60px;background:#41ad7f;border-radius:0 3.200px 3.200px 0"></div>
<div style="position:absolute;left:1142.00px;top:415.50px;width:93.30px;height:8.60px;background:#bfc4d0;border-radius:0 3.200px 3.200px 0"></div>
<div style="position:absolute;left:1142.00px;top:426.10px;width:243.40px;height:8.60px;background:#41ad7f;border-radius:0 3.200px 3.200px 0"></div>
<div style="position:absolute;left:1142.00px;top:446.70px;width:48.00px;height:8.60px;background:#bfc4d0;border-radius:0 3.200px 3.200px 0"></div>
<div style="position:absolute;left:1142.00px;top:457.30px;width:136.70px;height:8.60px;background:#41ad7f;border-radius:0 3.200px 3.200px 0"></div>
<div style="position:absolute;left:1142.00px;top:476.80px;width:48.00px;height:8.60px;background:#bfc4d0;border-radius:0 3.200px 3.200px 0"></div>
<div style="position:absolute;left:1142.00px;top:487.40px;width:95.80px;height:8.60px;background:#41ad7f;border-radius:0 3.200px 3.200px 0"></div>
<div style="position:absolute;left:1142.00px;top:506.70px;width:48.00px;height:8.60px;background:#bfc4d0;border-radius:0 3.200px 3.200px 0"></div>
<div style="position:absolute;left:1142.00px;top:517.30px;width:78.00px;height:8.60px;background:#41ad7f;border-radius:0 3.200px 3.200px 0"></div>
<div style="position:absolute;left:1142.00px;top:536.50px;width:48.00px;height:8.60px;background:#bfc4d0;border-radius:0 3.200px 3.200px 0"></div>
<div style="position:absolute;left:1142.00px;top:547.10px;width:48.00px;height:8.60px;background:#41ad7f;border-radius:0 3.200px 3.200px 0"></div>
<div style="position:absolute;left:1142.00px;top:566.50px;width:48.00px;height:8.60px;background:#bfc4d0;border-radius:0 3.200px 3.200px 0"></div>
<div style="position:absolute;left:1142.00px;top:577.10px;width:48.00px;height:8.60px;background:#41ad7f;border-radius:0 3.200px 3.200px 0"></div>
<div style="position:absolute;left:1377.70px;top:645.30px;width:4.70px;height:4.70px;background:#b3bac5;border-radius:50%"></div>
<span class="t" style="top:640.50px;font-size:10.6px;line-height:12.72px;color:#6b778c;left:1385.78px;-webkit-text-stroke:0.3px #6b778c;">Authors</span>
<div style="position:absolute;left:1436.60px;top:645.30px;width:4.70px;height:4.70px;background:#22a06b;border-radius:50%"></div>
<span class="t" style="top:640.50px;font-size:10.6px;line-height:12.72px;color:#6b778c;letter-spacing:0.024px;left:1444.63px;-webkit-text-stroke:0.3px #6b778c;">New contents</span>
<svg style="left:1085.9px;top:662.8px" width="21.3" height="21.3" viewBox="0 0 22 22"><rect width="22" height="22" rx="0.8" fill="#8257c8"/><path d="M6.300 7.400C8 3.800 13.600 3.400 16.200 8.600" fill="none" stroke="#5a3da3" stroke-width="2.600" stroke-linecap="round"/><path d="M16.200 15.400C14.400 18.600 9.200 18.600 6.800 13.600" fill="none" stroke="#5a3da3" stroke-width="2.600" stroke-linecap="round"/><path d="M7 6.300C8.800 3 14.200 2.800 16.800 8" fill="none" stroke="#fff" stroke-width="2.300" stroke-linecap="round"/><path d="M14.600 8.500l5.200-1-1.900 5.100z" fill="#fff"/><path d="M15.600 14.600C13.800 17.800 8.800 17.600 6.600 12.800" fill="none" stroke="#3cc9b6" stroke-width="2.300" stroke-linecap="round"/><path d="M3.300 11.800l2.500-4 2.600 3.200z" fill="#3cc9b6"/></svg>
<span class="t" style="top:668.50px;font-size:12.5px;line-height:15.0px;color:#2a62c9;letter-spacing:-0.544px;left:1120.23px;">Sensor Technology Research</span>
<span class="t" style="top:668.50px;font-size:11.8px;line-height:14.16px;color:#22345a;left:1409.34px;">30</span>
<span class="t" style="top:668.50px;font-size:11.8px;line-height:14.16px;color:#22345a;left:1496.07px;">72</span>
<svg style="left:1087.3px;top:696.5px" width="20.9" height="20.9" viewBox="0 0 22 22"><rect width="22" height="22" rx="1.200" fill="#4fa6e6"/><path d="M10 16L16.500 8 22 14.500V21a1 1 0 0 1-1 1H10z" fill="#a9c3dc"/><path d="M16.500 8l-2.600 3.200 1.500-.600 1.100 1 1.100-1.100 1.700.800z" fill="#fff"/><path d="M0 16.500L8.500 4.300 18.500 22H1a1 1 0 0 1-1-1z" fill="#cfe4f5"/><path d="M0 18l6.500-5 5 9H1a1 1 0 0 1-1-1z" fill="#e9f3fb"/><path d="M8.500 4.300L4.200 10.500l2.300-1.200 1.700 1.600 1.600-1.700 2.400 1.700z" fill="#fff"/><path d="M9.300 4.600l2.300 1.300-2.300 1.300z" fill="#f08a4b"/></svg>
<span class="t" style="top:702.50px;font-size:12.5px;line-height:15.0px;color:#2a62c9;letter-spacing:-0.525px;left:1121.27px;">Market Research and Trends</span>
<span class="t" style="top:702.50px;font-size:11.8px;line-height:14.16px;color:#22345a;left:1409.34px;">20</span>
<span class="t" style="top:702.50px;font-size:11.8px;line-height:14.16px;color:#22345a;left:1496.00px;">53</span>
<svg style="left:1088.1px;top:731.8px" width="20.7" height="20.7" viewBox="0 0 22 22"><rect width="22" height="22" rx="1.800" fill="#f84d4d"/><circle cx="11" cy="9.300" r="6.300" fill="#e9eff4"/><path d="M11 3a6.300 6.300 0 0 1 0 12.600z" fill="#d3dde6"/><path d="M9.250 0h3.500v8.400a1.750 1.750 0 0 1-3.500 0z" fill="#f84d4d"/><path d="M9 14.500h4V22H9z" fill="#b9c7d5"/><path d="M9 14.500h1.300V22H9z" fill="#d3dde6"/><path d="M11.900 14.500H13V22h-1.100z" fill="#a5b5c6"/><circle cx="11" cy="13.400" r="1" fill="#b0bfce"/></svg>
<span class="t" style="top:737.50px;font-size:12.5px;line-height:15.0px;color:#2a62c9;letter-spacing:-0.378px;left:1120.37px;">Hardware Specifications</span>
<span class="t" style="top:737.50px;font-size:11.8px;line-height:14.16px;color:#22345a;left:1409.34px;">10</span>
<span class="t" style="top:737.50px;font-size:11.8px;line-height:14.16px;color:#22345a;left:1495.94px;">30</span>
</div>
</body></html>
